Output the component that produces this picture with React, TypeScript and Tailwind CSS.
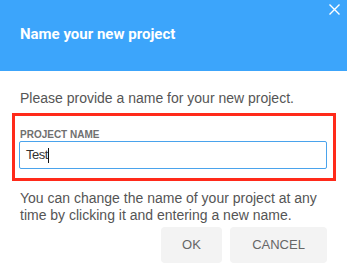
export default function App() {
  return (
    <div className="relative h-[273px] w-[347px] overflow-hidden bg-white font-['Liberation_Sans',Arial,sans-serif]">
      {/* Header */}
      <div className="relative h-[71px] bg-[#3ca5fb] px-5 pt-[25px]">
        <h1 className="font-['Roboto',sans-serif] text-[15px] font-bold leading-[18px] text-white">Name your new project</h1>
        <button className="absolute left-[329px] top-[4px] text-white">
          <svg width="11" height="11" viewBox="0 0 11 11" fill="none" stroke="currentColor" strokeWidth="1.4">
            <path d="M0.5 0.5L10.5 10.5M10.5 0.5L0.5 10.5" />
          </svg>
        </button>
      </div>

      {/* Body */}
      <div className="px-5 pt-[19px]">
        <p className="text-[14px] leading-[17px] text-[#555]">Please provide a name for your new project.</p>

        <div className="-ml-2 mt-[6px] w-[324px] border-[3px] border-[#ff2a1a] pb-[9px] pl-1 pr-[6px] pt-[13px]">
          <label className="block pl-px text-[10px] font-bold leading-[12px] text-[#707070]">PROJECT NAME</label>
          <div className="flex h-[28px] items-center rounded-[2px] border border-[#4aa3ec] pl-[6px] text-[13px] tracking-[-0.5px] text-[#333]">
            Test<span className="ml-[0.5px] h-[15px] w-px bg-[#111]" />
          </div>
        </div>

        <p className="mt-[9px] text-[14px] leading-[17px] text-[#555]">
          You can change the name of your project at any time by clicking it and entering a new name.
        </p>

        <div className="mt-[3px] flex justify-end gap-2">
          <button className="h-[36px] w-[61px] rounded-[4px] bg-[#f3f3f3] text-[13px] text-[#666]">OK</button>
          <button className="h-[36px] w-[97px] rounded-[4px] bg-[#f3f3f3] text-[13px] text-[#666]">CANCEL</button>
        </div>
      </div>
    </div>
  );
}
